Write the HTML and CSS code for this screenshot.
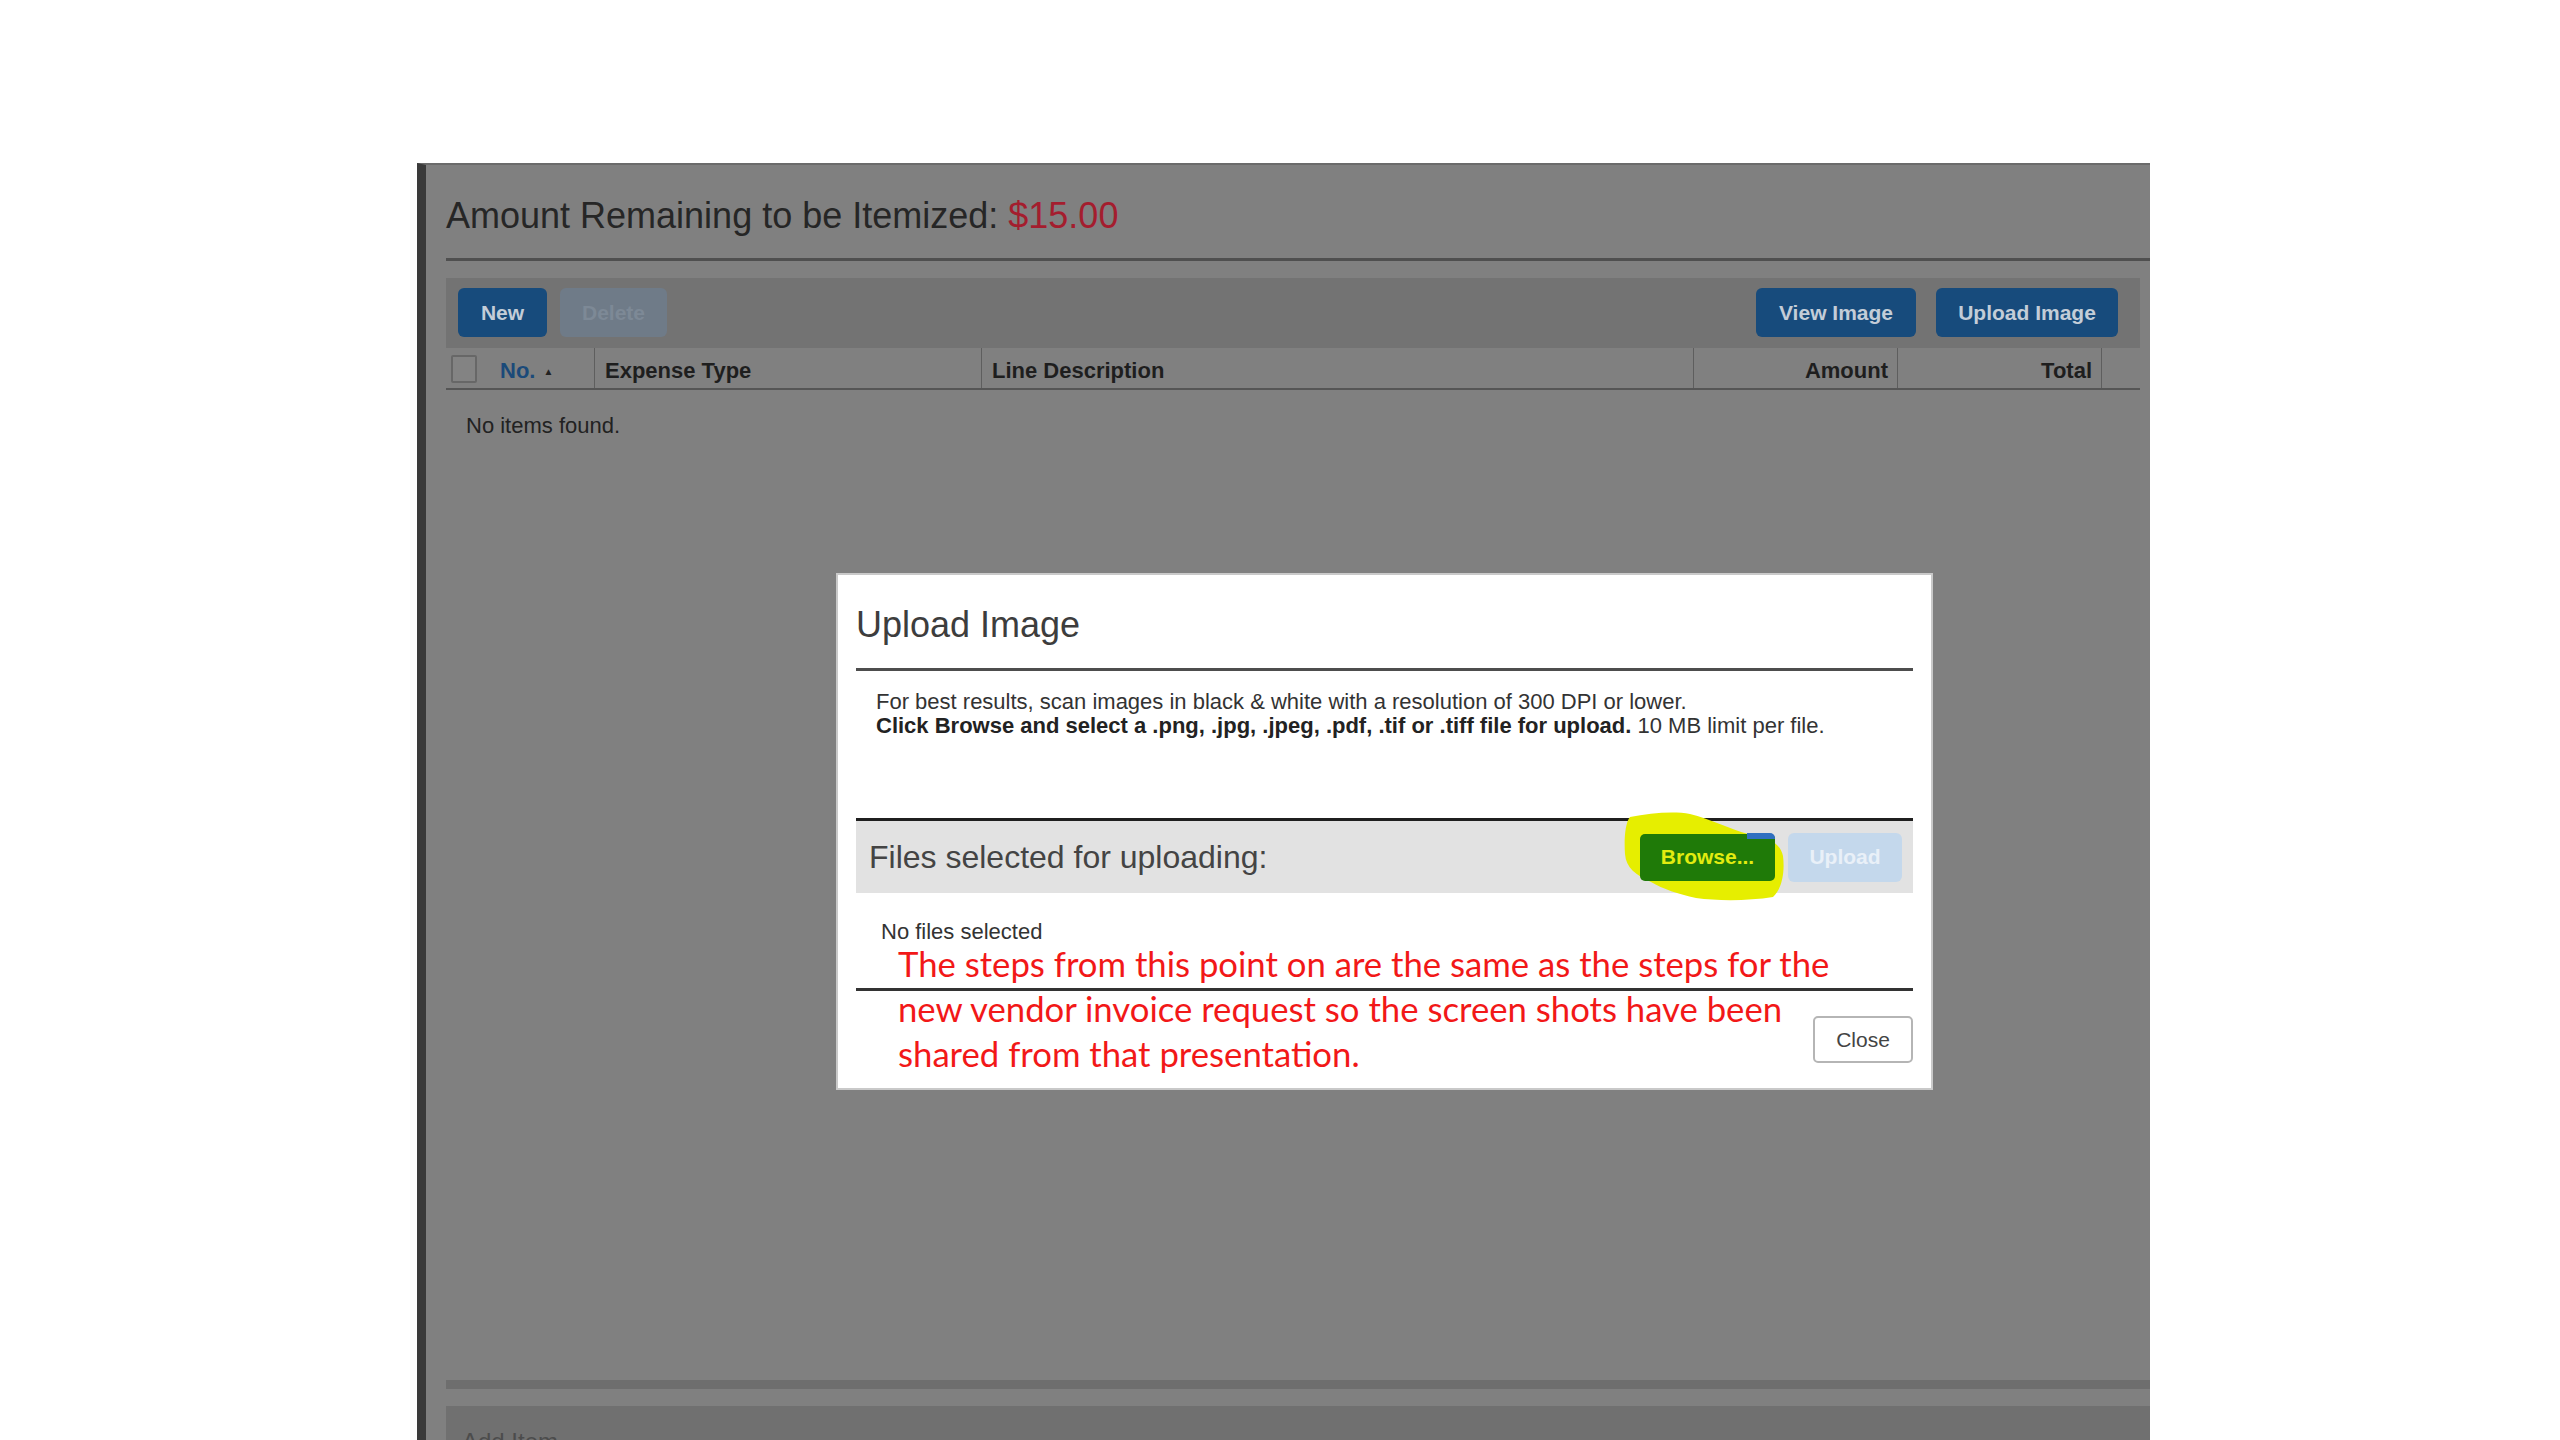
FILE: index.html
```html
<!DOCTYPE html>
<html lang="en">
<head>
    <meta charset="UTF-8">
    <title>Upload Image</title>
    <link rel="stylesheet" href="styles.css">
</head>
<body>
    <div class="slide">
        <div class="screen">
            <h1 class="remaining">Amount Remaining to be Itemized: <span class="amount">$15.00</span></h1>
            <div class="rule"></div>
            <div class="toolbar">
                <div class="toolbar-group">
                    <button class="btn btn-dark">New</button>
                    <button class="btn btn-faded">Delete</button>
                </div>
                <div class="toolbar-group toolbar-right">
                    <button class="btn btn-dark">View Image</button>
                    <button class="btn btn-dark">Upload Image</button>
                </div>
            </div>
            <div class="grid-head">
                <div class="col col-no"><span class="check"></span><span class="sort">No.</span><span class="arrow">&#9650;</span></div>
                <div class="col">Expense Type</div>
                <div class="col">Line Description</div>
                <div class="col col-num">Amount</div>
                <div class="col col-num">Total</div>
                <div class="col"></div>
            </div>
            <div class="grid-body">No items found.</div>
            <div class="divider"></div>
            <div class="add-item">Add Item</div>
        </div>

        <div class="modal">
            <h2 class="modal-title">Upload Image</h2>
            <div class="modal-rule"></div>
            <div class="modal-text">
                <div>For best results, scan images in black &amp; white with a resolution of 300 DPI or lower.</div>
                <div><b>Click Browse and select a .png, .jpg, .jpeg, .pdf, .tif or .tiff file for upload.</b> 10 MB limit per file.</div>
            </div>
            <div class="files-rule"></div>
            <div class="files-bar">
                <span class="files-label">Files selected for uploading:</span>
                <div class="files-actions">
                    <svg class="marker" width="166" height="92" viewBox="0 0 166 92">
                        <path d="M8 7 C28 3 52 1 68 4 C88 9 108 19 126 24 C146 28 158 32 161 46 C163 62 160 79 151 87 C126 91 96 91 74 88 C56 84 41 79 29 72 C14 65 4 58 3 44 C2 30 3 13 8 7 Z" fill="#e6ee00"/>
                    </svg>
                    <button class="btn btn-browse">Browse...</button>
                    <button class="btn btn-upload">Upload</button>
                </div>
            </div>
            <div class="files-status">No files selected</div>
            <div class="footer-rule"></div>
            <div class="modal-footer">
                <button class="btn btn-close">Close</button>
            </div>
        </div>

        <div class="note">
            The steps from this point on are the same as the steps for the<br>
            new vendor invoice request so the screen shots have been<br>
            shared from that presentation.
        </div>
    </div>
</body>
</html>
```

FILE: styles.css
```css
body {
    margin: 0;
    background: #fff;
    font-family: "Liberation Sans", Arial, sans-serif;
    overflow: hidden;
}

.slide {
    position: relative;
    width: 2560px;
    height: 1440px;
    padding: 163px 0 0 417px;
    box-sizing: border-box;
}

.screen {
    width: 1733px;
    height: 1277px;
    box-sizing: border-box;
    background: #808080;
    border-left: 9px solid #3a3a3a;
    border-top: 2px solid #6b6b6b;
    padding-left: 20px;
    overflow: hidden;
}

.remaining {
    margin: 31px 0 22px;
    font-size: 36px;
    line-height: 40px;
    font-weight: normal;
    color: #262626;
}

.amount {
    color: #a41d2e;
}

.rule {
    height: 3px;
    background: #4f4f4f;
}

.toolbar {
    margin: 17px 10px 0 0;
    height: 70px;
    box-sizing: border-box;
    padding: 10px 22px 11px 12px;
    background: #737373;
    display: flex;
    justify-content: space-between;
}

.toolbar-group {
    display: flex;
    gap: 13px;
}

.toolbar-right {
    gap: 20px;
}

.btn {
    font-family: "Liberation Sans", Arial, sans-serif;
    font-weight: bold;
    font-size: 21px;
    border: none;
    border-radius: 6px;
    padding: 0 20px;
    height: 49px;
}

.btn-dark {
    background: #174b7c;
    color: #c3cdd8;
}

.toolbar-group:first-child .btn-dark {
    width: 89px;
}

.toolbar-right .btn-dark:first-child {
    width: 160px;
}

.toolbar-right .btn-dark:last-child {
    width: 182px;
}

.btn-faded {
    width: 107px;
    background: #6f7b88;
    color: #7d8996;
}

.grid-head {
    margin-right: 10px;
    height: 42px;
    box-sizing: border-box;
    border-bottom: 2px solid #555;
    display: grid;
    grid-template-columns: 148px 387px 712px 204px 204px 39px;
    font-size: 22px;
    font-weight: bold;
    color: #1e1e1e;
}

.col {
    display: flex;
    align-items: center;
    padding: 6px 0 0 10px;
    border-left: 1px solid #5e5e5e;
}

.col-no {
    border-left: none;
    padding-left: 5px;
}

.col-num {
    justify-content: flex-end;
    padding: 6px 9px 0 0;
}

.check {
    width: 22px;
    height: 24px;
    border: 2px solid #676767;
    border-radius: 2px;
    background: #838383;
    margin: -4px 23px 0 0;
}

.sort {
    color: #1b4a79;
}

.arrow {
    font-size: 10px;
    margin-left: 8px;
    color: #222;
}

.grid-body {
    height: 990px;
    box-sizing: border-box;
    padding: 24px 0 0 20px;
    font-size: 22px;
    line-height: 24px;
    color: #222;
}

.divider {
    height: 9px;
    background: #6e6e6e;
}

.add-item {
    margin-top: 17px;
    height: 60px;
    background: #707070;
    padding: 22px 16px;
    box-sizing: border-box;
    font-size: 24px;
    color: #4c4c4c;
}

/* dialog over the page */
.modal {
    position: absolute;
    left: 836px;
    top: 573px;
    width: 1097px;
    height: 517px;
    box-sizing: border-box;
    background: #fff;
    border: 2px solid #c9c9c9;
    padding: 30px 18px 0;
}

.modal-title {
    margin: 0;
    font-size: 36px;
    line-height: 40px;
    font-weight: normal;
    color: #3d3d3d;
}

.modal-rule {
    margin-top: 23px;
    height: 3px;
    background: #4d4d4d;
}

.modal-text {
    height: 48px;
    padding: 19px 0 0 20px;
    font-size: 22px;
    line-height: 24px;
    color: #333;
}

.modal-text b {
    color: #222;
}

.files-rule {
    margin-top: 80px;
    height: 3px;
    background: #1f1f1f;
}

.files-bar {
    height: 72px;
    background: #e2e2e2;
    display: flex;
    align-items: center;
    justify-content: space-between;
    padding: 0 11px 0 13px;
}

.files-label {
    font-size: 32px;
    color: #444;
}

.files-actions {
    position: relative;
    display: flex;
    align-items: center;
    gap: 13px;
}

.marker {
    position: absolute;
    left: -18px;
    top: -23px;
}

.btn-browse {
    position: relative;
    width: 135px;
    height: 47px;
    padding: 0;
    background: #1f7a08;
    color: #e2ec10;
    border-radius: 5px;
}

.btn-browse::after {
    content: "";
    position: absolute;
    right: 0;
    top: -1px;
    width: 28px;
    height: 6px;
    background: #2f6fc0;
    border-top-right-radius: 5px;
}

.btn-upload {
    position: relative;
    width: 114px;
    padding: 0;
    background: #c4d8ec;
    color: #e9f0f8;
}

.files-status {
    margin-top: 27px;
    padding-left: 25px;
    font-size: 22px;
    line-height: 24px;
    color: #333;
}

.footer-rule {
    margin-top: 44px;
    height: 3px;
    background: #333;
}

.modal-footer {
    display: flex;
    justify-content: flex-end;
    padding-top: 25px;
}

.btn-close {
    width: 100px;
    height: 47px;
    padding: 0;
    background: #fff;
    border: 2px solid #b5b5b5;
    border-radius: 5px;
    font-weight: normal;
    color: #444;
}

/* red slide annotation */
.note {
    position: absolute;
    left: 898px;
    top: 941px;
    font-family: Lato, "Open Sans", sans-serif;
    font-size: 34.7px;
    line-height: 45px;
    color: #f21818;
}
```
